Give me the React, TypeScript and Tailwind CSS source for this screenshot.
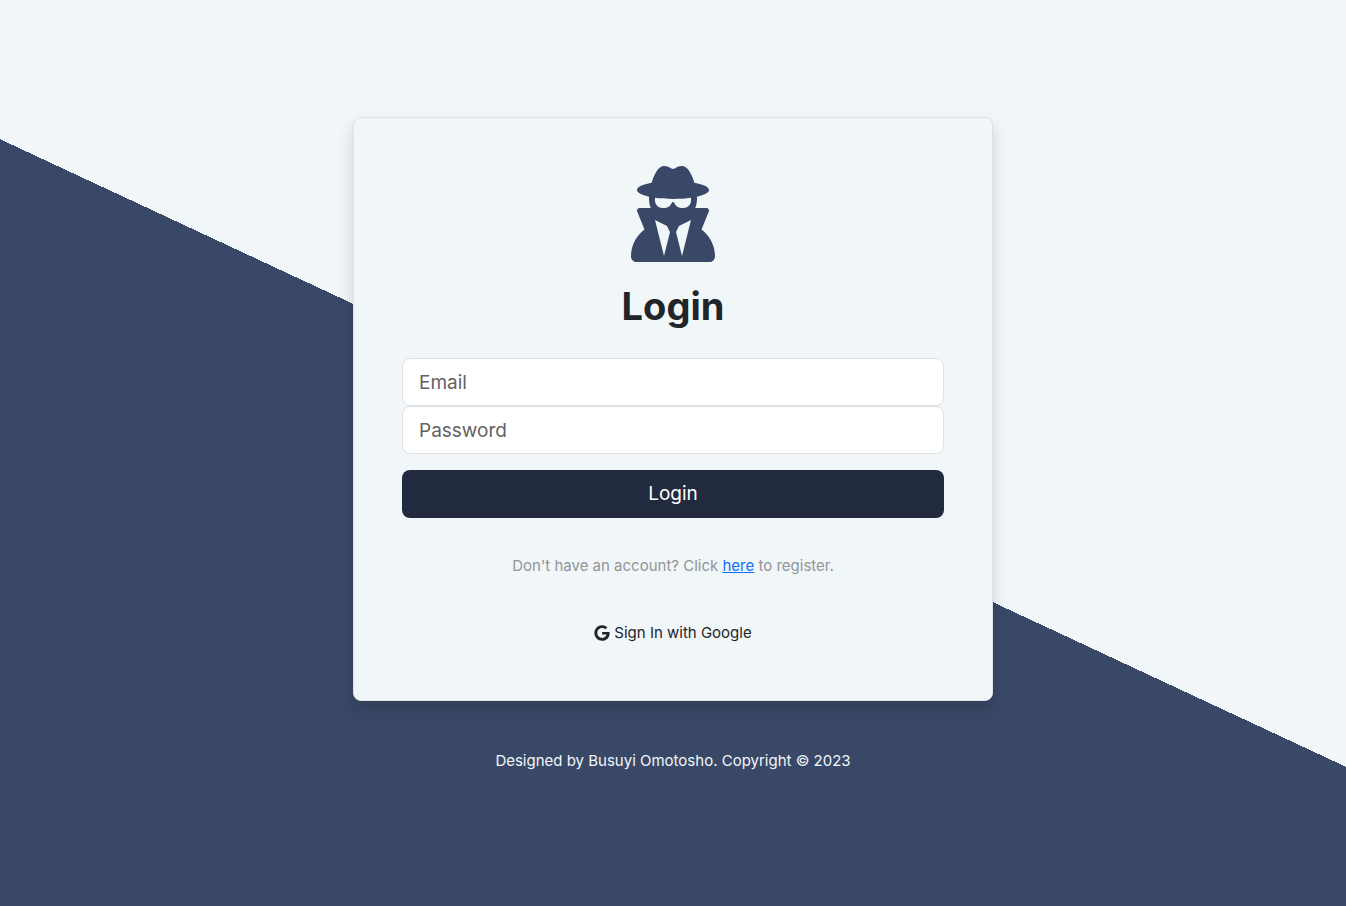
import { FaGoogle, FaUserSecret } from "react-icons/fa6";

const fieldClass =
  "block h-12 w-full rounded-lg border border-[#dee2e6] bg-white px-4 text-[19px] text-[#212529] outline-none placeholder:text-[#626262] focus:border-[#86b7fe]";

export default function App() {
  return (
    <main className="min-h-screen bg-[linear-gradient(25deg,#394867_50%,#f1f6f9_50%)] px-4 font-['Inter',sans-serif] text-[15px] leading-6 text-[#212529]">
      <div className="mx-auto max-w-[640px] pt-[117px] pb-8">
        <section className="rounded-lg border border-[#dee2e6] bg-[#f1f6f9] p-12 shadow-[0_8px_16px_rgba(0,0,0,0.15)]">
          <form className="flex flex-col items-center" onSubmit={(e) => e.preventDefault()}>
            <FaUserSecret className="h-24 w-21 text-[#394867]" aria-hidden="true" />
            <h1 className="mt-5 mb-7 text-[38px] leading-12 font-bold">Login</h1>
            <input type="email" aria-label="Email" placeholder="Email" className={fieldClass} />
            <input type="password" aria-label="Password" placeholder="Password" className={fieldClass} />
            <button type="submit" className="mt-4 h-12 w-full rounded-lg bg-[#212a3e] text-[19px] text-white">
              Login
            </button>
          </form>
          <p className="mt-9 text-center text-[#909597]">
            Don't have an account? Click{" "}
            <a href="#register" className="text-[#0d6efd] underline">here</a> to register.
          </p>
          <div className="mt-9 flex justify-center">
            <button type="button" className="flex items-center gap-1 py-[7px]">
              <FaGoogle className="size-4" aria-hidden="true" />
              Sign In with Google
            </button>
          </div>
        </section>
        <footer className="mt-12 text-center text-[#f1f6f9]">
          Designed by Busuyi Omotosho. Copyright © 2023
        </footer>
      </div>
    </main>
  );
}
